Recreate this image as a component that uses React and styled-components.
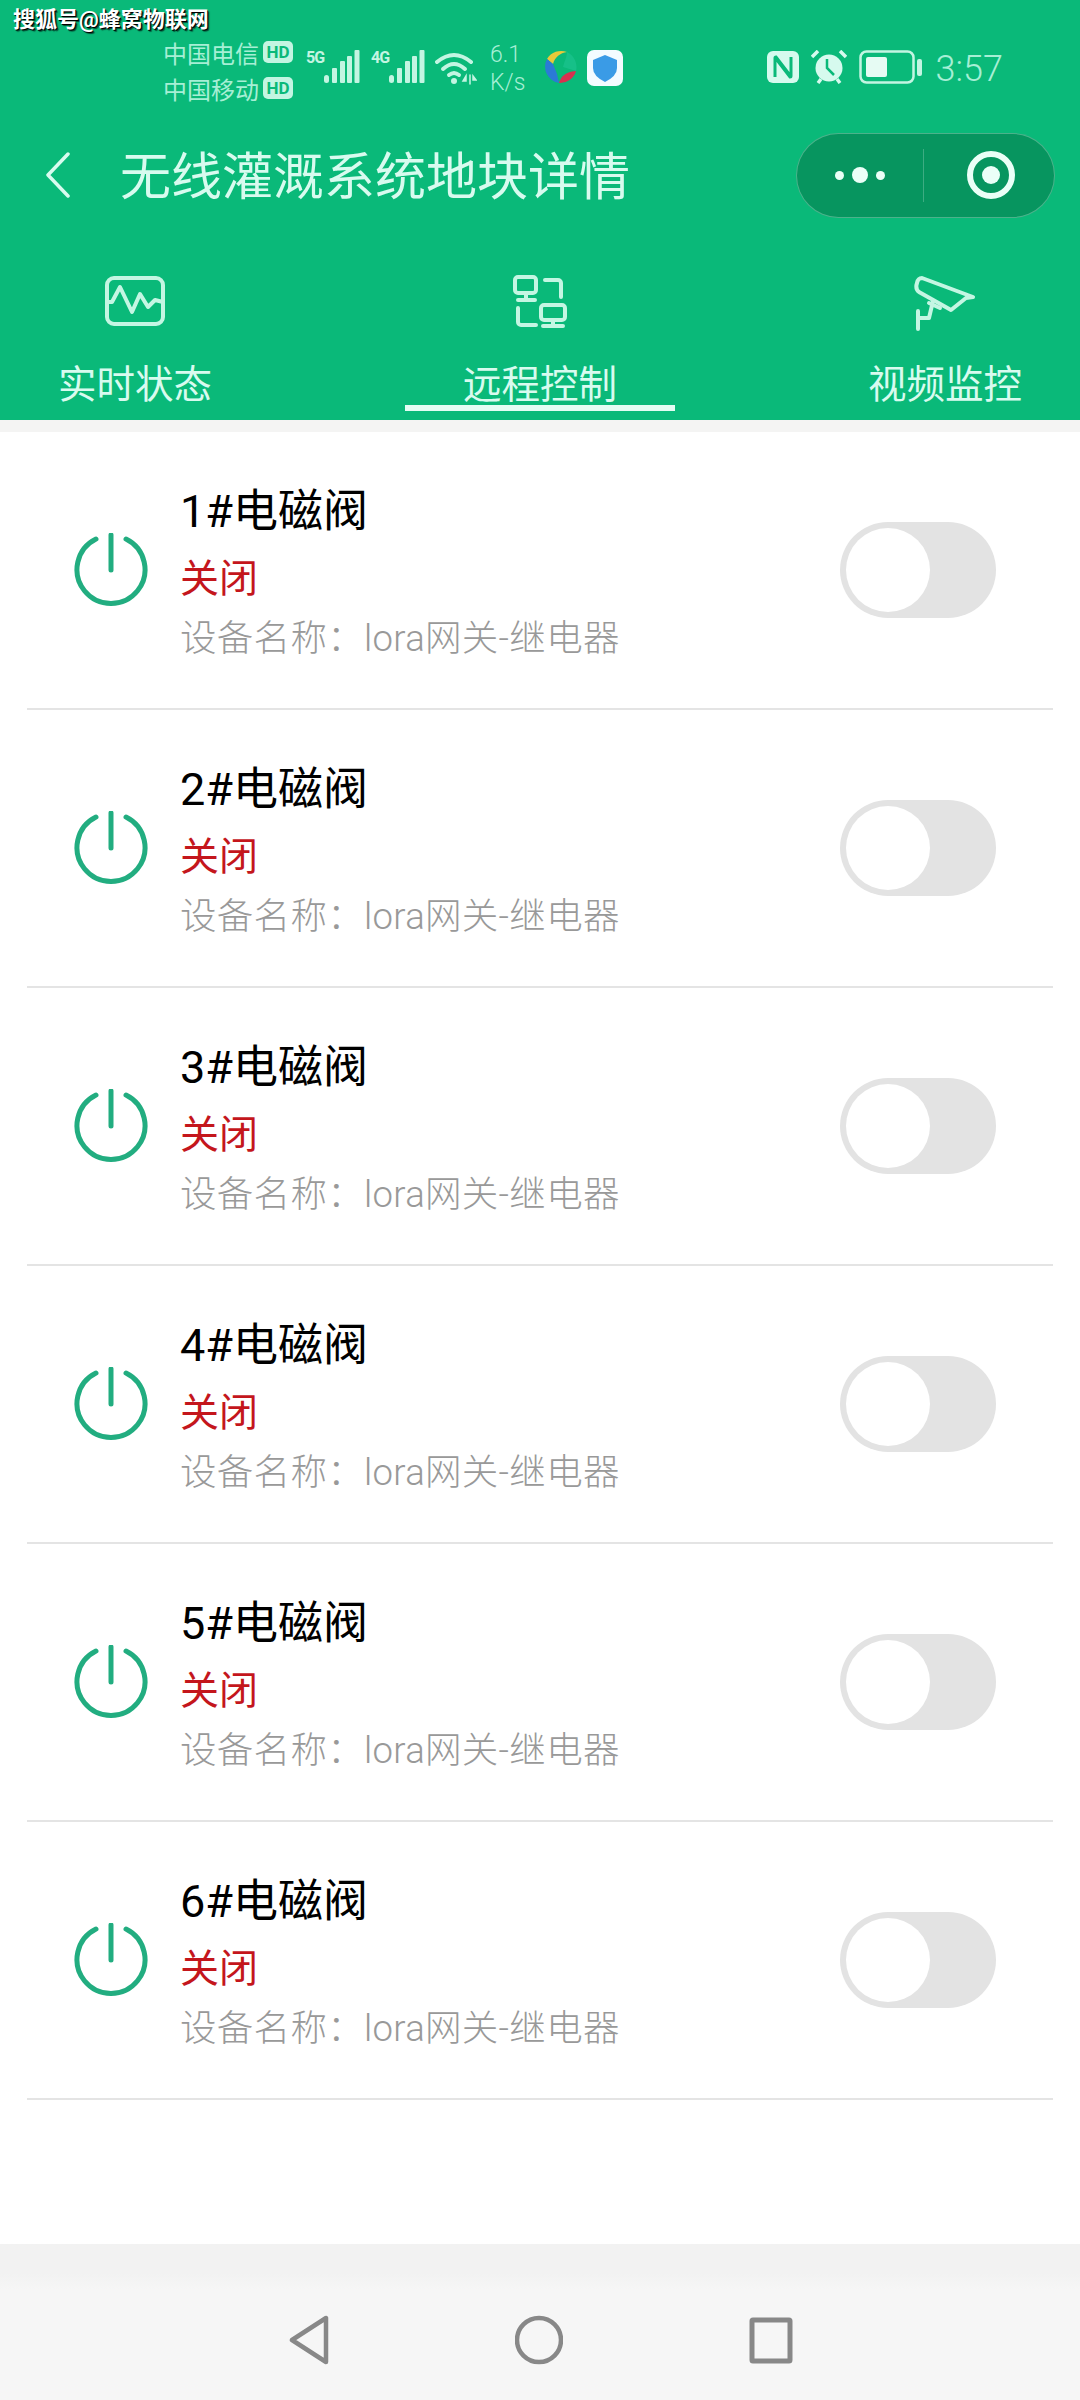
import React from 'react'
import styled, { createGlobalStyle } from 'styled-components'

const GREEN = '#0ab979'
const PALE = '#d8fbef'
const MUTED = '#a6efd5'

const GlobalStyle = createGlobalStyle`
  html, body {
    margin: 0;
    padding: 0;
    background: #fff;
  }
  body {
    font-family: Roboto, "Noto Sans CJK SC", sans-serif;
  }
  * {
    box-sizing: border-box;
  }
`

const Page = styled.div`
  position: relative;
  width: 1080px;
  height: 2400px;
  display: flex;
  flex-direction: column;
  overflow: hidden;
  background: #fff;
`

const Watermark = styled.div`
  position: absolute;
  top: 6px;
  left: 13px;
  font-size: 22px;
  line-height: 28px;
  font-weight: 700;
  color: #fff;
  text-shadow: 1px 1px 0 #000, 2px 2px 1px rgba(0, 0, 0, 0.6);
`

const Header = styled.header`
  height: 420px;
  flex: none;
  display: flex;
  flex-direction: column;
  background: ${GREEN};
  color: ${PALE};
`

const StatusBar = styled.div`
  height: 110px;
  flex: none;
  padding: 40px 77px 0 163px;
  display: flex;
  align-items: flex-start;
  color: ${MUTED};
`

const Carriers = styled.div`
  width: 131px;
  margin-top: -6px;
  flex: none;
  display: flex;
  flex-direction: column;
`

const Carrier = styled.div`
  height: 36px;
  display: flex;
  align-items: center;
  gap: 4px;
  font-size: 24px;
`

const HdBadge = styled.span`
  width: 30px;
  height: 22px;
  display: flex;
  align-items: center;
  justify-content: center;
  border-radius: 5px;
  background: #c3f5e2;
  color: ${GREEN};
  font-size: 17px;
  font-weight: 700;
`

const SignalGroup = styled.div`
  width: 65px;
  height: 44px;
  flex: none;
  display: flex;
  align-items: flex-start;
  margin-left: ${(p) => p.$gap}px;
`

const NetLabel = styled.span`
  width: 18px;
  margin-top: 10px;
  flex: none;
  font-size: 16px;
  line-height: 16px;
  font-weight: 700;
  letter-spacing: -1px;
  color: #c3f5e2;
`

const SignalIcon = styled.svg`
  width: 36px;
  height: 34px;
  margin-top: 10px;
  flex: none;
`

const WifiIcon = styled.svg`
  width: 42px;
  height: 34px;
  margin: 11px 0 0 -1px;
  flex: none;
`

const Speed = styled.div`
  width: 40px;
  margin: 1px 0 0 13px;
  flex: none;
  font-size: 23px;
  line-height: 28px;
  font-weight: 300;
  text-align: left;
`

const AppIcon = styled.svg`
  width: ${(p) => p.$size}px;
  height: ${(p) => p.$size}px;
  margin: 10px 0 0 ${(p) => p.$gap}px;
  flex: none;
`

const StatusRight = styled.div`
  margin-left: auto;
  height: 44px;
  display: flex;
  align-items: center;
  padding-top: 10px;
`

const StatusGlyph = styled.svg`
  height: 34px;
  width: ${(p) => p.$w}px;
  margin-right: ${(p) => p.$gap}px;
  flex: none;
`

const Clock = styled.span`
  margin-top: 4px;
  font-size: 36px;
  line-height: 36px;
  font-weight: 300;
`

const NavBar = styled.div`
  height: 130px;
  flex: none;
  padding: 0 25px 0 45px;
  display: flex;
  align-items: center;
`

const BackIcon = styled.svg`
  width: 25px;
  height: 46px;
  flex: none;
`

const Title = styled.h1`
  margin: 5px 0 0 50px;
  font-size: 51px;
  line-height: 60px;
  font-weight: 400;
  white-space: nowrap;
`

const Capsule = styled.div`
  width: 259px;
  height: 85px;
  margin-left: auto;
  flex: none;
  display: flex;
  align-items: center;
  border: 1.5px solid rgba(255, 255, 255, 0.28);
  border-radius: 43px;
  background: #07955f;
`

const CapsuleHalf = styled.div`
  flex: 1;
  height: 53px;
  display: flex;
  align-items: center;
  justify-content: center;
  gap: 8px;
  padding-left: ${(p) => p.$inset || 0}px;
  & + & {
    border-left: 1px solid rgba(255, 255, 255, 0.22);
  }
`

const Dot = styled.span`
  width: ${(p) => p.$size}px;
  height: ${(p) => p.$size}px;
  border-radius: 50%;
  background: #eafff7;
`

const Ring = styled.span`
  width: 48px;
  height: 48px;
  display: flex;
  align-items: center;
  justify-content: center;
  border: 6px solid #eafff7;
  border-radius: 50%;
  &::after {
    content: '';
    width: 18px;
    height: 18px;
    border-radius: 50%;
    background: #eafff7;
  }
`

const Tabs = styled.nav`
  height: 180px;
  flex: none;
  display: flex;
  justify-content: space-between;
`

const Tab = styled.div`
  position: relative;
  width: 270px;
  height: 180px;
  padding-top: 35px;
  display: flex;
  flex-direction: column;
  align-items: center;
  &::after {
    content: '';
    display: ${(p) => (p.$active ? 'block' : 'none')};
    position: absolute;
    left: 0;
    right: 0;
    bottom: 9px;
    height: 6px;
    background: #e4fdf4;
  }
`

const TabIconBox = styled.div`
  height: 56px;
  display: flex;
  align-items: flex-start;
`

const TabIcon = styled.svg`
  width: ${(p) => p.$w}px;
  height: 56px;
`

const TabLabel = styled.span`
  margin-top: 31px;
  font-size: 38.5px;
  line-height: 46px;
`

const Band = styled.div`
  height: 12px;
  flex: none;
  background: #f4f4f3;
`

const List = styled.main`
  flex: 1;
  padding: 0 27px;
`

const Row = styled.div`
  height: 278px;
  padding: 0 57px 0 47px;
  display: flex;
  align-items: center;
  border-bottom: 2px solid #e4e4e4;
`

const PowerIcon = styled.svg`
  width: 74px;
  height: 74px;
  flex: none;
`

const RowText = styled.div`
  margin-left: 32px;
  padding-top: 5px;
  display: flex;
  flex-direction: column;
`

const RowName = styled.div`
  font-size: 45px;
  line-height: 56px;
  color: #000;
`

const RowState = styled.div`
  margin-top: 17px;
  font-size: 39px;
  line-height: 44px;
  color: #c4161c;
`

const RowDevice = styled.div`
  margin-top: 16px;
  font-size: 36.5px;
  line-height: 44px;
  font-weight: 300;
  letter-spacing: 0.3px;
  color: #999;
  white-space: nowrap;
`

const Toggle = styled.div`
  width: 156px;
  height: 96px;
  margin-left: auto;
  flex: none;
  padding: 6px;
  display: flex;
  justify-content: ${(p) => (p.$on ? 'flex-end' : 'flex-start')};
  border-radius: 48px;
  background: ${(p) => (p.$on ? GREEN : '#e3e3e3')};
`

const Knob = styled.span`
  width: 84px;
  height: 84px;
  border-radius: 50%;
  background: #fff;
`

const SystemNav = styled.footer`
  height: 156px;
  flex: none;
  padding: 71px 0 0 2px;
  display: flex;
  justify-content: center;
  align-items: flex-start;
  gap: 186px;
  background: linear-gradient(#f2f2f2 0, #f2f2f2 30px, #f6f6f6 45px);
`

const SystemIcon = styled.svg`
  width: ${(p) => p.$w}px;
  height: 50px;
  flex: none;
`

const Signal = () => (
  <SignalIcon viewBox="0 0 36 34" fill="currentColor" color="#c3f5e2">
    <rect x="0" y="25" width="5" height="8" rx="2.5" />
    <rect x="8" y="18" width="5" height="15" rx="1" />
    <rect x="16" y="11" width="5" height="22" rx="1" />
    <rect x="23" y="6" width="5" height="27" rx="1" />
    <rect x="30.5" y="0" width="5" height="33" rx="1" />
  </SignalIcon>
)

const Wifi = () => (
  <WifiIcon viewBox="0 0 42 34" fill="none" stroke="#c3f5e2" strokeWidth="4" strokeLinecap="round">
    <path d="M2 11 Q19 -3 36 11" />
    <path d="M8 18 Q19 8 30 18" />
    <path d="M14 24 Q19 20 24 24" />
    <circle cx="19" cy="30" r="3" fill="#c3f5e2" stroke="none" />
    <path d="M31 25 L28 30 H31 Z M35 24 V33 M38 25 L41 29 H38 Z" fill="#c3f5e2" stroke="#c3f5e2" strokeWidth="1.5" />
  </WifiIcon>
)

const ColorBall = () => (
  <AppIcon $size={34} $gap={13} viewBox="0 0 34 34">
    <path d="M4 9 A16.5 16.5 0 0 1 24 2 C17 3 12 7 10 14 Z" fill="#e8c93a" />
    <path d="M24 2 A16.5 16.5 0 0 1 33 21 L20 17 C22 10 24 6 24 2 Z" fill="#16c088" />
    <path d="M33 21 A16.5 16.5 0 0 1 16 33 C18 27 21 22 33 21 Z" fill="#d8304f" />
    <path d="M16 33 A16.5 16.5 0 0 1 4 9 L10 14 L14 24 Z" fill="#2b7ad6" />
  </AppIcon>
)

const ShieldTile = () => (
  <AppIcon $size={36} $gap={10} viewBox="0 0 36 36">
    <rect x="0" y="0" width="36" height="36" rx="7" fill="#f3fbff" />
    <path d="M18 5 L30 10 V18 Q30 26 18 32 Q6 26 6 18 V10 Z" fill="#3a9be6" />
  </AppIcon>
)

const Nfc = () => (
  <StatusGlyph $w={32} $gap={12} viewBox="0 0 32 34">
    <rect x="0" y="1" width="32" height="32" rx="6" fill="#d6faee" />
    <path d="M8 27 V8 Q8 7 9 7 L22 24 M24 7 V26 Q24 27 23 27 L10 10" fill="none" stroke={GREEN} strokeWidth="3" />
  </StatusGlyph>
)

const Alarm = () => (
  <StatusGlyph $w={36} $gap={12} viewBox="0 0 36 34">
    <circle cx="18" cy="18" r="13.5" fill="#d6faee" />
    <path d="M1 7 L7 1 M35 7 L29 1 M7 33 L10 29 M29 33 L26 29" stroke="#d6faee" strokeWidth="3.5" />
    <path d="M16 9 V18 L23 25" fill="none" stroke={GREEN} strokeWidth="2.5" />
  </StatusGlyph>
)

const Battery = () => (
  <StatusGlyph $w={63} $gap={14} viewBox="0 0 63 34">
    <rect x="1.5" y="1.5" width="53" height="31" rx="6" fill="none" stroke="#c3f5e2" strokeWidth="2.5" />
    <rect x="7" y="7" width="21" height="20" rx="2" fill="#e6fbf3" />
    <rect x="58" y="9" width="5" height="17" rx="2" fill="#c3f5e2" />
  </StatusGlyph>
)

const Pulse = () => (
  <TabIcon $w={60} viewBox="0 0 60 56" fill="none" stroke="#c4f6e3" strokeWidth="4" strokeLinejoin="round" strokeLinecap="round">
    <rect x="2" y="3" width="56" height="46" rx="7" />
    <path d="M2 27 H7 L15 12 L27 37 L35 19 L43 32 L50 25 L58 27" />
  </TabIcon>
)

const Devices = () => (
  <TabIcon $w={54} viewBox="0 0 54 56" fill="none" stroke="#c4f6e3" strokeWidth="4" strokeLinejoin="round" strokeLinecap="round">
    <rect x="2" y="2" width="21" height="16" rx="3" />
    <path d="M13 18 V25 M5 25 H22" />
    <path d="M32 5 H45 A3 3 0 0 1 48 8 V22" />
    <rect x="28" y="30" width="24" height="15" rx="3" />
    <path d="M40 45 V51 M30 51 H50" />
    <path d="M5 33 V47 A3 3 0 0 0 8 50 H23" />
  </TabIcon>
)

const Camera = () => (
  <TabIcon $w={62} viewBox="0 0 62 56" fill="none" stroke="#c4f6e3" strokeWidth="4" strokeLinejoin="round" strokeLinecap="round">
    <path d="M8 3 L59 22 L52 23 L37 35 L5 17 Q1 14 3 8 Q4 3 8 3 Z" />
    <path d="M19 26 L15 43 H4 M4 36 V54 M15 28 L26 33" />
  </TabIcon>
)

const tabs = [
  { label: '实时状态', icon: <Pulse /> },
  { label: '远程控制', icon: <Devices />, active: true },
  { label: '视频监控', icon: <Camera /> },
]

const valves = [1, 2, 3, 4, 5, 6]

export default function App() {
  return (
    <Page>
      <GlobalStyle />
      <Watermark>搜狐号@蜂窝物联网</Watermark>
      <Header>
        <StatusBar>
          <Carriers>
            <Carrier>中国电信<HdBadge>HD</HdBadge></Carrier>
            <Carrier>中国移动<HdBadge>HD</HdBadge></Carrier>
          </Carriers>
          <SignalGroup $gap={12}>
            <NetLabel>5G</NetLabel>
            <Signal />
          </SignalGroup>
          <SignalGroup $gap={0}>
            <NetLabel>4G</NetLabel>
            <Signal />
          </SignalGroup>
          <Wifi />
          <Speed>6.1<br />K/s</Speed>
          <ColorBall />
          <ShieldTile />
          <StatusRight>
            <Nfc />
            <Alarm />
            <Battery />
            <Clock>3:57</Clock>
          </StatusRight>
        </StatusBar>
        <NavBar>
          <BackIcon viewBox="0 0 25 46" fill="none" stroke={PALE} strokeWidth="3.5" strokeLinecap="round" strokeLinejoin="round">
            <path d="M23 2 L3 23 L23 44" />
          </BackIcon>
          <Title>无线灌溉系统地块详情</Title>
          <Capsule>
            <CapsuleHalf>
              <Dot $size={9} />
              <Dot $size={16} />
              <Dot $size={9} />
            </CapsuleHalf>
            <CapsuleHalf $inset={4}>
              <Ring />
            </CapsuleHalf>
          </Capsule>
        </NavBar>
        <Tabs>
          {tabs.map((tab) => (
            <Tab key={tab.label} $active={tab.active}>
              <TabIconBox>{tab.icon}</TabIconBox>
              <TabLabel>{tab.label}</TabLabel>
            </Tab>
          ))}
        </Tabs>
      </Header>
      <Band />
      <List>
        {valves.map((n) => (
          <Row key={n}>
            <PowerIcon viewBox="0 0 74 74" fill="none" stroke="#22ad80" strokeWidth="5" strokeLinecap="round">
              <path d="M22 6 A34 34 0 1 0 52 6" />
              <path d="M37 2 V37" />
            </PowerIcon>
            <RowText>
              <RowName>{n}#电磁阀</RowName>
              <RowState>关闭</RowState>
              <RowDevice>设备名称：lora网关-继电器</RowDevice>
            </RowText>
            <Toggle>
              <Knob />
            </Toggle>
          </Row>
        ))}
      </List>
      <SystemNav>
        <SystemIcon $w={40} viewBox="0 0 40 50" fill="none" stroke="#888" strokeWidth="4.5" strokeLinejoin="round">
          <path d="M37 3 V47 L3 25 Z" />
        </SystemIcon>
        <SystemIcon $w={48} viewBox="0 0 48 50" fill="none" stroke="#888" strokeWidth="4.5">
          <circle cx="24" cy="25" r="22" />
        </SystemIcon>
        <SystemIcon $w={44} viewBox="0 0 44 50" fill="none" stroke="#888" strokeWidth="5" strokeLinejoin="round">
          <rect x="3" y="5" width="38" height="41" rx="1" />
        </SystemIcon>
      </SystemNav>
    </Page>
  )
}
